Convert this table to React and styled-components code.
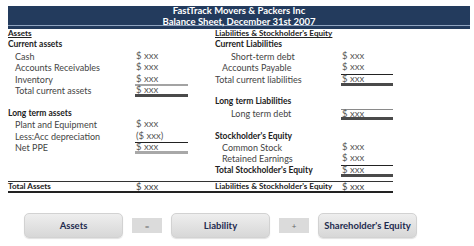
import React from "react";
import styled, { createGlobalStyle } from "styled-components";

const GlobalStyle = createGlobalStyle`
  html, body {
    margin: 0;
    background: #ffffff;
  }
  body {
    font-family: Lato, "Liberation Sans", Arial, sans-serif;
  }
`;

const COLUMNS = "127px 53px 27px 126px 52px";

const Page = styled.div`
  width: 474px;
  height: 246px;
  box-sizing: border-box;
  padding: 6px 0 0 8px;
  display: flex;
  flex-direction: column;
`;

const Banner = styled.div`
  width: 462px;
  height: 23px;
  background: #233b5d;
  box-shadow: inset 0 -3px 0 #233b5d, inset 0 -4px 0 #8fa3bf;
  color: #ffffff;
  font-weight: 700;
  font-size: 9.5px;
  line-height: 10.5px;
  display: flex;
  flex-direction: column;
  align-items: center;
`;

const Grid = styled.div`
  display: grid;
  grid-template-columns: ${COLUMNS};
  grid-auto-rows: 11.4px;
  width: 385px;
  color: #444444;
`;

const Label = styled.div`
  padding-left: ${({ $indent }) => $indent || 0}px;
  font-size: ${({ $bold, $heading }) => ($heading ? 8.1 : $bold ? 8.5 : 9)}px;
  font-weight: ${({ $bold }) => ($bold ? 700 : 400)};
  color: ${({ $bold }) => ($bold ? "#222222" : "#444444")};
  text-decoration: ${({ $heading }) => ($heading ? "underline" : "none")};
  line-height: 9.6px;
  white-space: nowrap;
`;

const RULES = {
  line: "1px solid #222222",
  grey: "2px solid #a3a3a3",
  heavy: "3px solid #4a4a4a",
  greyHeavy: "3px solid #a8a8a8",
  faint: "1px solid #8a8a8a",
};

const Amount = styled.div`
  box-sizing: border-box;
  padding-left: 1px;
  font-size: 9.5px;
  line-height: 8px;
  color: #555555;
  border-bottom: ${({ $under }) => ($under ? RULES[$under] : "none")};
  border-top: ${({ $over }) => ($over ? RULES[$over] : "none")};
  white-space: nowrap;
`;

const Gap = styled.div``;

const TotalRow = styled.div`
  display: grid;
  grid-template-columns: ${COLUMNS};
  width: 385px;
  height: 12px;
  box-sizing: border-box;
  margin-top: 4px;
  border-top: 1px solid #333333;
  border-bottom: 2px solid #222222;
  align-items: center;
  line-height: 9px;
`;

const TotalLabel = styled.div`
  font-size: 8.1px;
  font-weight: 700;
  color: #222222;
  white-space: nowrap;
`;

const TotalAmount = styled.div`
  padding-left: 1px;
  font-size: 9.5px;
  color: #444444;
`;

const Equation = styled.div`
  display: flex;
  align-items: center;
  gap: 9px;
  margin: 20px 0 0 16px;
`;

const Term = styled.div`
  width: 99px;
  height: 25px;
  box-sizing: border-box;
  border-radius: 5px;
  border: 1px solid #d2d2d2;
  background: linear-gradient(#eeeeee, #d7d7d7);
  box-shadow: 0 1px 1px rgba(0, 0, 0, 0.12);
  display: flex;
  align-items: center;
  justify-content: center;
  font-weight: 700;
  font-size: 9.5px;
  color: #1e2b4f;
`;

const Operator = styled.div`
  width: 30px;
  height: 15px;
  background: #dbdbdb;
  color: #666666;
  font-size: 8px;
  display: flex;
  align-items: center;
  justify-content: center;
`;

const rows = [
  {
    left: { text: "Assets", heading: true, bold: true },
    right: { text: "Liabilities & Stockholder's Equity", heading: true, bold: true },
  },
  {
    left: { text: "Current assets", bold: true },
    right: { text: "Current Liabilities", bold: true },
  },
  {
    left: { text: "Cash", indent: 7, value: "$ xxx" },
    right: { text: "Short-term debt", indent: 16, value: "$ xxx" },
  },
  {
    left: { text: "Accounts Receivables", indent: 7, value: "$ xxx" },
    right: { text: "Accounts Payable", indent: 7, value: "$ xxx", under: "line" },
  },
  {
    left: { text: "Inventory", indent: 7, value: "$ xxx", under: "grey" },
    right: { text: "Total current liabilities", value: "$ xxx", under: "heavy" },
  },
  {
    left: { text: "Total current assets", indent: 7, value: "$ xxx", under: "heavy" },
    right: {},
  },
  {
    left: {},
    right: { text: "Long term Liabilities", bold: true },
  },
  {
    left: { text: "Long term assets", bold: true },
    right: { text: "Long term debt", indent: 16, value: "$ xxx", over: "faint", under: "heavy" },
  },
  {
    left: { text: "Plant and Equipment", indent: 7, value: "$ xxx" },
    right: {},
  },
  {
    left: { text: "Less:Acc depreciation", indent: 7, value: "($ xxx)", under: "line" },
    right: { text: "Stockholder's Equity", bold: true },
  },
  {
    left: { text: "Net PPE", indent: 7, value: "$ xxx", under: "greyHeavy" },
    right: { text: "Common Stock", indent: 7, value: "$ xxx" },
  },
  {
    left: {},
    right: { text: "Retained Earnings", indent: 7, value: "$ xxx", under: "line" },
  },
  {
    left: {},
    right: { text: "Total Stockholder's Equity", bold: true, value: "$ xxx", under: "heavy" },
  },
];

const Side = ({ cell }) => (
  <>
    <Label $indent={cell.indent} $bold={cell.bold} $heading={cell.heading}>
      {cell.text}
    </Label>
    <Amount $under={cell.under} $over={cell.over}>
      {cell.value}
    </Amount>
  </>
);

const App = () => (
  <>
    <GlobalStyle />
    <Page>
      <Banner>
        <div>FastTrack Movers &amp; Packers Inc</div>
        <div>Balance Sheet, December 31st 2007</div>
      </Banner>

      <Grid>
        {rows.map((row, i) => (
          <React.Fragment key={i}>
            <Side cell={row.left} />
            <Gap />
            <Side cell={row.right} />
          </React.Fragment>
        ))}
      </Grid>

      <TotalRow>
        <TotalLabel>Total Assets</TotalLabel>
        <TotalAmount>$ xxx</TotalAmount>
        <Gap />
        <TotalLabel>Liabilities &amp; Stockholder's Equity</TotalLabel>
        <TotalAmount>$ xxx</TotalAmount>
      </TotalRow>

      <Equation>
        <Term>Assets</Term>
        <Operator>=</Operator>
        <Term>Liability</Term>
        <Operator>+</Operator>
        <Term>Shareholder's Equity</Term>
      </Equation>
    </Page>
  </>
);

export default App;
